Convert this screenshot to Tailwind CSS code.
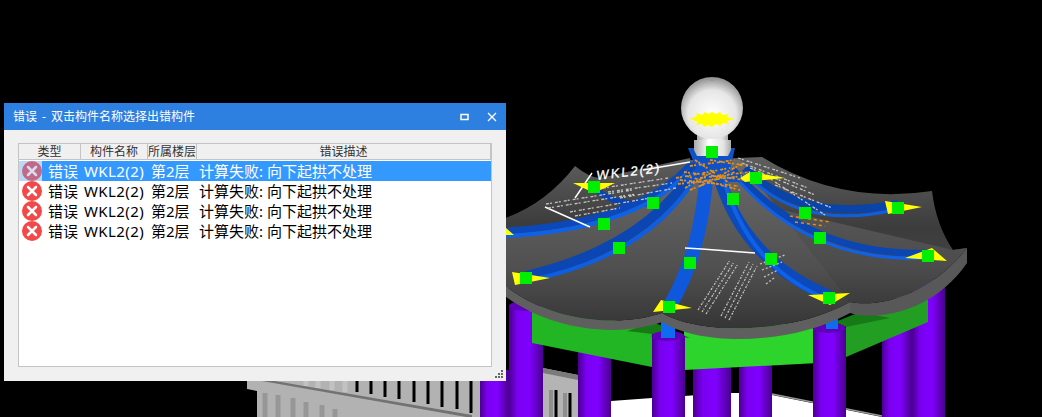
<!DOCTYPE html>
<html><head><meta charset="utf-8"><script src="https://cdn.jsdelivr.net/npm/@tailwindcss/browser@4"></script></head>
<body class="bg-black">
<div class="relative w-[1042px] h-[417px] overflow-hidden bg-black font-['Noto_Sans','Noto_Sans_CJK_SC',sans-serif]">
<svg class="absolute left-0 top-0" width="1042" height="417" viewBox="0 0 1042 417" fill="none">
<defs>
<linearGradient id="p" x1="0" x2="1" y1="0" y2="0"><stop offset="0" stop-color="#4a0090"/><stop offset=".25" stop-color="#7a00f0"/><stop offset=".6" stop-color="#8000ff"/><stop offset="1" stop-color="#4a0090"/></linearGradient>
<linearGradient id="r" gradientUnits="userSpaceOnUse" x1="0" x2="0" y1="160" y2="340"><stop offset="0" stop-color="#6a6a6a"/><stop offset=".6" stop-color="#505050"/><stop offset="1" stop-color="#303030"/></linearGradient>
<linearGradient id="rw" gradientUnits="userSpaceOnUse" x1="0" x2="0" y1="200" y2="310"><stop offset="0" stop-color="#585858"/><stop offset=".6" stop-color="#4c4c4c"/><stop offset="1" stop-color="#383838"/></linearGradient>
<linearGradient id="rb" x1="0" x2="0" y1="0" y2="1"><stop offset="0" stop-color="#5e5e5e"/><stop offset=".5" stop-color="#3c3c3c"/><stop offset="1" stop-color="#4c4c4c"/></linearGradient>
<radialGradient id="b" cx=".5" cy=".6" r=".6"><stop offset="0" stop-color="#fff"/><stop offset=".65" stop-color="#e6e6e6"/><stop offset="1" stop-color="#8c8c8c"/></radialGradient>
<linearGradient id="n" x1="0" x2="1" y1="0" y2="0"><stop offset="0" stop-color="#aaa"/><stop offset=".4" stop-color="#fff"/><stop offset=".8" stop-color="#e4e4e4"/><stop offset="1" stop-color="#aaa"/></linearGradient>
</defs>
<!-- floor and railing -->
<path d="M611 401L652 398L731 393L739 393L772 395L882 417L611 417Z" fill="#fff"/>
<path d="M772 394L882 416" stroke="#999" stroke-width="1.5"/>
<path d="M247 381H480V417H257V391L247 389Z" fill="#b2b2b2"/>
<path d="M306 381V386M318 381V388M332 381V390M345 381V392" stroke="#c2c2c2" stroke-width="5"/>
<path d="M275 381L472 415L472 418L262 381Z" fill="#727272"/>
<path d="M357 381V392M371 381V394M385 381V397M399 381V399M414 381V402M428 381V404M442 381V407M457 381V409M471 381V413" stroke="#000" stroke-width="3"/>
<path d="M265 393V417M278 395V417M293 398V417M306 402V417M322 405V417M335 409V417" stroke="#979797" stroke-width="5"/>
<path d="M543 368L578 375V417H543Z" fill="#b4b4b4"/>
<path d="M543 368L578 375V380L543 373Z" fill="#7a7a7a"/>
<path d="M556 390V417M570 393V417" stroke="#000" stroke-width="3"/>
<path d="M551 390V417M565 393V417" stroke="#8f8f8f" stroke-width="4"/>
<!-- pillars -->
<rect x="480" y="370" width="29" height="47" fill="url(#p)"/>
<rect x="509" y="306" width="34" height="111" fill="url(#p)"/>
<ellipse cx="526" cy="306" rx="17" ry="5" fill="#5d00b8"/>
<rect x="578" y="340" width="33" height="77" fill="url(#p)"/>
<rect x="693" y="350" width="38" height="67" fill="url(#p)"/>
<rect x="739" y="350" width="33" height="67" fill="url(#p)"/>
<rect x="882" y="320" width="30" height="97" fill="url(#p)"/>
<rect x="912" y="280" width="33" height="137" fill="url(#p)"/>
<!-- beam -->
<path d="M846 323L928 296V322L846 357Z" fill="#229f22"/>
<path d="M532 305L652 327V367L532 343Z" fill="#22b524"/>
<path d="M684 330L818 322V363L684 370Z" fill="#2cd42c"/>
<path d="M627 331L653 322L690 338L652 334Z" fill="#167a16"/>
<path d="M835 322L860 312L890 318L846 327Z" fill="#167a16"/>
<!-- front pillars -->
<rect x="652" y="336" width="33" height="81" fill="url(#p)"/>
<ellipse cx="668" cy="336" rx="16.500" ry="5" fill="#5d00b8"/>
<rect x="813" y="328" width="33" height="89" fill="url(#p)"/>
<ellipse cx="829" cy="328" rx="16.500" ry="5" fill="#5d00b8"/>
<rect x="661" y="320" width="14" height="18" fill="#0f6cf0"/>
<rect x="826" y="315" width="12" height="14" fill="#0f6cf0"/>
<!-- roof back panels -->
<path d="M762 157Q840 205 932 191Q936 225 953 250L967 248L900 300L712 240L690 160Z" fill="url(#rb)"/>
<path d="M575 166Q590 178 600 178L690 158L712 240L500 290V220Q545 205 575 166Z" fill="url(#rb)"/>
<!-- right panel with fascia -->
<path d="M850 302C880 308 930 295 967 248V263C935 310 880 322 850 313Z" fill="#585858"/>
<path d="M740 200L953 250L967 248C930 295 880 308 850 302Z" fill="url(#rw)"/>
<!-- front fascia -->
<path d="M500 281C540 318 610 330 662 313V322C610 340 540 326 500 292Z" fill="#5f5f5f"/>
<path d="M662 313C700 335 790 335 850 302V313C790 346 700 346 662 322Z" fill="#5f5f5f"/>
<!-- front panel -->
<path d="M695 160L740 160L850 302C790 335 700 335 662 313C610 330 540 318 500 281V228Q620 230 695 160Z" fill="url(#r)"/>
<!-- ribs -->
<path d="M594 188Q615 207 650 203" stroke="#0a44b0" stroke-width="6"/>
<path d="M692 163Q640 223 506 231" stroke="#0c48b8" stroke-width="7"/>
<path d="M692 167Q642 229 506 236" stroke="#0f62e8" stroke-width="4"/>
<path d="M698 163Q650 247 526 276" stroke="#0b46b2" stroke-width="10"/>
<path d="M703 165Q655 256 526 281" stroke="#0f5ee0" stroke-width="4"/>
<path d="M707 165Q703 250 669 307" stroke="#0f58dc" stroke-width="14"/>
<path d="M716 165Q738 258 829 296" stroke="#0c4abc" stroke-width="12"/>
<path d="M721 168Q743 266 829 300" stroke="#0f62e8" stroke-width="4"/>
<path d="M733 170Q810 257 928 253" stroke="#0b46b2" stroke-width="7"/>
<path d="M733 174Q808 264 928 258" stroke="#0f62e8" stroke-width="3"/>
<path d="M745 168Q800 224 898 204" stroke="#0a44a8" stroke-width="8"/>
<path d="M745 173Q802 233 898 209" stroke="#0f5ee0" stroke-width="3"/>
<path d="M688 148L735 148L730 170L745 182L680 182L696 168Z" fill="#0f52c8"/>
<!-- white leader lines -->
<path d="M690 162L643 170M592 173L575 198M545 207L590 227M685 248L702 249L755 253" stroke="#fff" stroke-width="1.5"/>
<!-- annotation text -->
<text x="597" y="180" font-size="13" fill="#fff" font-style="italic" transform="rotate(-7 597 180)" letter-spacing="2" stroke="#fff" stroke-width=".3" font-family="'Liberation Sans',sans-serif">WKL2(2)</text>
<path d="M603 188L668 178M608 192L672 183M620 198L676 188M546 204L632 190M548 208L636 194M570 212L650 198M575 216L620 208" stroke="#c4c4c4" stroke-width="1.300" stroke-dasharray="3 1 2 3"/>
<path d="M685 188L716 170M680 180L738 186M690 190L735 172M710 160L748 166M700 178L750 172M678 184L742 176M684 172L745 180M690 166L735 160M686 176L740 190M695 160L728 182M676 178L730 168M700 186L742 164" stroke="#e89010" stroke-width="1.800" stroke-dasharray="3 1 2 3"/>
<path d="M738 158L800 178M742 163L808 188M750 168L815 195M760 172L825 215M775 185L832 208" stroke="#c4c4c4" stroke-width="1.300" stroke-dasharray="3 1 2 3"/>
<path d="M790 216L830 222M795 222L825 226" stroke="#e89010" stroke-width="1.500" stroke-dasharray="3 3"/>
<path d="M698 310L730 260M702 312L734 262M706 314L738 264M721 316L749 262M725 318L753 264M729 320L757 266" stroke="#c4c4c4" stroke-width="1.300" stroke-dasharray="2 1 1 2"/>
<path d="M760 264L785 255M762 270L782 262M764 277L778 270M766 284L774 278" stroke="#c4c4c4" stroke-width="1.300" stroke-dasharray="2 2"/>
<!-- finial -->
<rect x="697" y="128" width="31" height="28" fill="url(#n)"/>
<path d="M694 140H731V150L728 156H697L694 150Z" fill="url(#n)"/>
<circle cx="712" cy="108" r="31" fill="url(#b)"/>
<ellipse cx="712" cy="80" rx="2.500" ry="1" fill="#9a9a9a"/>
<path d="M690 119L697 116L696 113L702 115L705 112L708 114L712 112L716 114L720 112L723 115L729 114L727 117L735 119L727 121L729 124L723 123L720 126L716 124L712 127L708 125L704 127L702 124L696 125L698 122Z" fill="#ff0"/>
<!-- yellow tips -->
<path d="M573 183H615L594 193Z M885 201L922 207L888 214Z M905 258L932 248L947 261Z M808 295L850 293L830 305Z M653 312L661 300L692 308Z M512 272L550 278L515 285Z M506 228L514 235H506Z M740 178L750 172L785 178L745 182Z" fill="#ff0"/>
<!-- nodes -->
<path d="M706 146h12v12h-12z M588 181h12v12h-12z M647 197h12v12h-12z M598 218h12v12h-12z M613 242h12v12h-12z M520 272h12v12h-12z M684 257h12v12h-12z M663 301h12v12h-12z M727 193h12v12h-12z M750 172h12v12h-12z M799 207h12v12h-12z M814 232h12v12h-12z M892 202h12v12h-12z M922 250h12v12h-12z M765 253h12v12h-12z M823 292h12v12h-12z" fill="#00ee00"/>
</svg>

<div class="absolute left-[4px] top-[103px] w-[502px] h-[278px] flex flex-col bg-[#f0f0f0]">
  <div class="h-[27px] shrink-0 bg-[#2d7fe0] flex items-center pl-[9px] text-[12px] text-white">
    <span class="grow [word-spacing:2px]">错误 - 双击构件名称选择出错构件</span>
    <svg class="mr-[18px]" width="9" height="9" viewBox="0 0 9 9" fill="none"><path d="M1 2.500H8V7.500H1Z" stroke="#fff" stroke-width="1.500"/></svg>
    <svg class="mr-[9px]" width="10" height="10" viewBox="0 0 10 10" fill="none"><path d="M1 1L9 9M9 1L1 9" stroke="#fff" stroke-width="1.300"/></svg>
  </div>
  <div class="relative grow">
    <div class="absolute left-[14px] right-[14px] top-[13px] bottom-[14px] border border-[#c4c4c4] bg-white flex flex-col">
      <div class="h-[16px] shrink-0 flex text-[12px] text-[#333] bg-[#f0f0f0] border-b border-[#c4c4c4] leading-[16px] text-center">
        <div class="w-[62px] border-r border-[#c4c4c4]">类型</div>
        <div class="w-[67px] border-r border-[#c4c4c4]">构件名称</div>
        <div class="w-[49px] border-r border-[#c4c4c4] whitespace-nowrap">所属楼层</div>
        <div class="grow border-r border-[#c4c4c4]">错误描述</div>
      </div>
      <div class="text-[15px] leading-[20px] text-black">
        <div class="h-[20px] mt-[1px] flex items-center bg-[#3399ff] text-white whitespace-nowrap">
          <div class="w-[23px] h-[20px] shrink-0 bg-[#bcd8f5] flex items-center justify-end"><svg width="20" height="20" viewBox="0 0 20 20"><circle cx="10" cy="10" r="10" fill="#c06a88"/><path d="M6 6L14 14M14 6L6 14" stroke="#d8dcf0" stroke-width="2.500" stroke-linecap="round"/></svg></div>
          <span class="ml-[6px] w-[36px]">错误</span><span class="w-[67px] tracking-[0.4px]">WKL2(2)</span><span class="w-[48px]">第2层</span><span>计算失败: 向下起拱不处理</span>
        </div>
        <div class="h-[20px] flex items-center whitespace-nowrap">
          <div class="w-[23px] h-[20px] shrink-0 flex items-center justify-end"><svg width="20" height="20" viewBox="0 0 20 20"><circle cx="10" cy="10" r="10" fill="#f44848"/><path d="M6 6L14 14M14 6L6 14" stroke="#fff" stroke-width="2.500" stroke-linecap="round"/></svg></div>
          <span class="ml-[6px] w-[36px]">错误</span><span class="w-[67px] tracking-[0.4px]">WKL2(2)</span><span class="w-[48px]">第2层</span><span>计算失败: 向下起拱不处理</span>
        </div>
        <div class="h-[20px] flex items-center whitespace-nowrap">
          <div class="w-[23px] h-[20px] shrink-0 flex items-center justify-end"><svg width="20" height="20" viewBox="0 0 20 20"><circle cx="10" cy="10" r="10" fill="#f44848"/><path d="M6 6L14 14M14 6L6 14" stroke="#fff" stroke-width="2.500" stroke-linecap="round"/></svg></div>
          <span class="ml-[6px] w-[36px]">错误</span><span class="w-[67px] tracking-[0.4px]">WKL2(2)</span><span class="w-[48px]">第2层</span><span>计算失败: 向下起拱不处理</span>
        </div>
        <div class="h-[20px] flex items-center whitespace-nowrap">
          <div class="w-[23px] h-[20px] shrink-0 flex items-center justify-end"><svg width="20" height="20" viewBox="0 0 20 20"><circle cx="10" cy="10" r="10" fill="#f44848"/><path d="M6 6L14 14M14 6L6 14" stroke="#fff" stroke-width="2.500" stroke-linecap="round"/></svg></div>
          <span class="ml-[6px] w-[36px]">错误</span><span class="w-[67px] tracking-[0.4px]">WKL2(2)</span><span class="w-[48px]">第2层</span><span>计算失败: 向下起拱不处理</span>
        </div>
      </div>
    </div>
    <svg class="absolute right-[2px] bottom-[2px]" width="10" height="9" viewBox="0 0 10 9"><path d="M7 0h2v2h-2z M4 3h2v2h-2z M7 3h2v2h-2z M1 6h2v2h-2z M4 6h2v2h-2z M7 6h2v2h-2z" fill="#666"/></svg>
  </div>
</div>
</div>
</body></html>
